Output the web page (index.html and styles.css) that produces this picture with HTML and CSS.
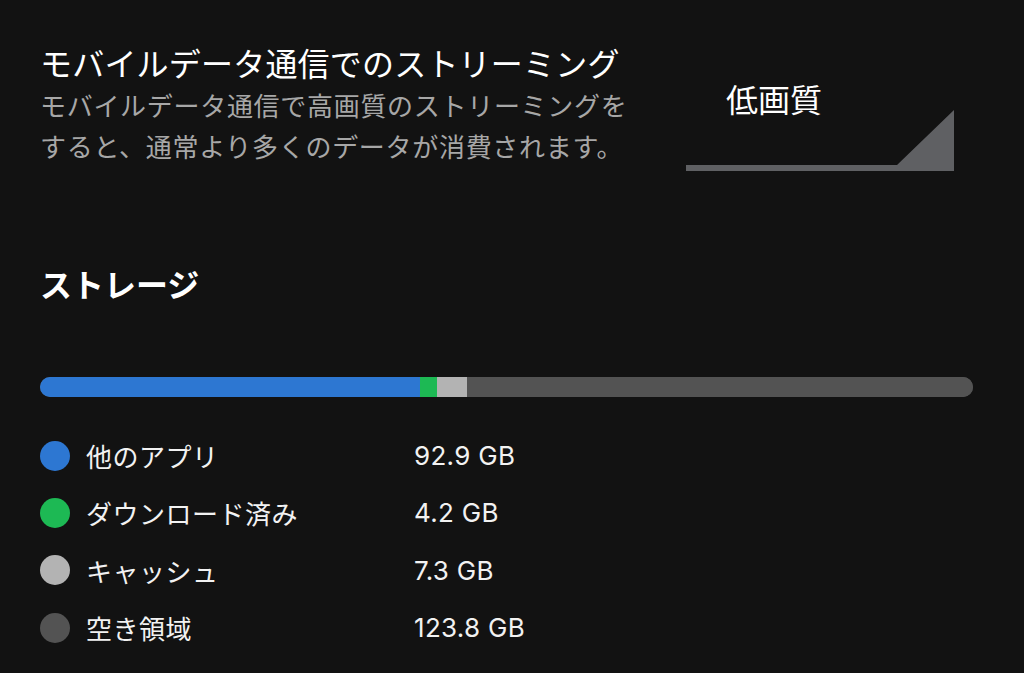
FILE: index.html
```html
<!DOCTYPE html>
<html lang="ja">
<head>
<meta charset="utf-8">
<link rel="stylesheet" href="styles.css">
</head>
<body>
<main class="page">
  <section class="stream-row">
    <div class="stream-text">
      <h2 class="stream-title">モバイルデータ通信でのストリーミング</h2>
      <p class="stream-desc">モバイルデータ通信で高画質のストリーミングをすると、通常より多くのデータが消費されます。</p>
    </div>
    <div class="quality">
      <div class="quality-label">低画質</div>
      <svg class="quality-arrow" width="270" height="62" viewBox="0 0 270 62">
        <polygon points="0,55 211,55 268,0 268,61 0,61" fill="#5f6063"/>
      </svg>
    </div>
  </section>

  <h2 class="storage-title">ストレージ</h2>

  <div class="bar">
    <div class="seg seg-apps" style="width:40.71%"></div>
    <div class="seg seg-dl" style="width:1.84%"></div>
    <div class="seg seg-cache" style="width:3.2%"></div>
    <div class="seg seg-free"></div>
  </div>

  <ul class="legend">
    <li class="legend-row"><span class="dot dot-apps"></span><span class="legend-label">他のアプリ</span><span class="legend-value">92.9 GB</span></li>
    <li class="legend-row"><span class="dot dot-dl"></span><span class="legend-label">ダウンロード済み</span><span class="legend-value">4.2 GB</span></li>
    <li class="legend-row"><span class="dot dot-cache"></span><span class="legend-label">キャッシュ</span><span class="legend-value">7.3 GB</span></li>
    <li class="legend-row"><span class="dot dot-free"></span><span class="legend-label">空き領域</span><span class="legend-value">123.8 GB</span></li>
  </ul>
</main>
</body>
</html>
```

FILE: styles.css
```css
html, body {
  margin: 0;
  padding: 0;
  background: #121212;
  height: 100%;
}
body {
  font-family: "Noto Sans CJK JP", "Noto Sans", sans-serif;
  color: #ffffff;
  overflow: hidden;
}
.page {
  padding: 40px 51px 0 40px;
}
.stream-row {
  display: flex;
  align-items: flex-start;
}
.stream-text {
  width: 646px;
  flex: none;
}
.stream-title {
  margin: 0;
  font-size: 32px;
  font-weight: 400;
  line-height: 44px;
  letter-spacing: 0.2px;
  color: #ffffff;
}
.stream-desc {
  margin: 0;
  width: 610px;
  font-size: 26px;
  line-height: 41px;
  color: #a7a7a7;
  letter-spacing: 0.7px;
}
.quality {
  width: 270px;
  flex: none;
  padding-top: 36px;
}
.quality-label {
  padding-left: 40px;
  font-size: 32px;
  line-height: 44px;
  color: #ffffff;
}
.quality-arrow {
  display: block;
  margin-top: -10px;
}
.storage-title {
  margin: 89px 0 0;
  font-size: 32px;
  font-weight: 700;
  line-height: 44px;
}
.bar {
  display: flex;
  height: 20px;
  margin-top: 72px;
  border-radius: 10px;
  overflow: hidden;
  background: #535353;
}
.seg { height: 100%; }
.seg-apps { background: #2d77d2; }
.seg-dl { background: #1db954; }
.seg-cache { background: #b3b3b3; }
.seg-free { flex: 1; background: #535353; }
.legend {
  list-style: none;
  margin: 30px 0 0;
  padding: 0;
}
.legend-row {
  display: flex;
  align-items: center;
  height: 57.3px;
}
.dot {
  width: 30px;
  height: 30px;
  border-radius: 50%;
  flex: none;
}
.dot-apps { background: #2d77d2; }
.dot-dl { background: #1db954; }
.dot-cache { background: #b3b3b3; }
.dot-free { background: #535353; }
.legend-label {
  width: 328px;
  margin-left: 16px;
  font-size: 26px;
  letter-spacing: 0.5px;
  color: #f2f2f2;
}
.legend-value {
  font-family: "Inter", "Liberation Sans", sans-serif;
  font-size: 26px;
  color: #f2f2f2;
  letter-spacing: 0.3px;
}
```
